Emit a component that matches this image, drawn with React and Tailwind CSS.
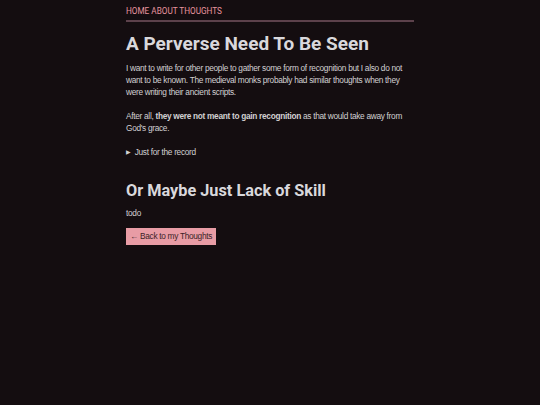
export default function App() {
  return (
    <div className="min-h-[405px] w-full bg-[#140d10] font-['Liberation_Sans',Arial,sans-serif] text-[#d2d0d2]">
      <div className="mx-auto w-[288px]">
        <nav className="border-b-2 border-[#5c414b] pt-[6px] pb-[4px] font-['Roboto','Liberation_Sans',sans-serif] text-[8.2px] leading-[10px] text-[#e8949f]">
          <span>HOME</span> <span>ABOUT</span> <span>THOUGHTS</span>
        </nav>
        <h1 className="mt-[10px] font-['Roboto','Liberation_Sans',sans-serif] text-[19px] leading-[24px] font-bold text-[#d9d8dc]">A Perverse Need To Be Seen</h1>
        <p className="mt-[6px] text-[8.3px] leading-[12px] tracking-[-0.3px]">
          I want to write for other people to gather some form of recognition but I also do not want to be known. The medieval monks probably had similar thoughts when they were writing their ancient scripts.
        </p>
        <p className="mt-[12px] text-[8.3px] leading-[12px] tracking-[-0.3px]">
          After all, <strong className="font-bold">they were not meant to gain recognition</strong> as that would take away from God's grace.
        </p>
        <div className="mt-[12px] flex items-center text-[8.3px] leading-[12px] tracking-[-0.3px]">
          <span className="mr-[4px] text-[6px]">▶</span>
          <span>Just for the record</span>
        </div>
        <h2 className="mt-[23px] font-['Roboto','Liberation_Sans',sans-serif] text-[16.3px] leading-[20px] font-bold text-[#d9d8dc]">Or Maybe Just Lack of Skill</h2>
        <p className="mt-[6px] text-[8.3px] leading-[12px] tracking-[-0.3px]">todo</p>
        <div className="mt-[3px]">
          <span className="inline-block bg-[#e89ca5] px-[4px] py-[3px] text-[8.3px] leading-[11px] tracking-[-0.3px] text-[#3b1f27]">← Back to my Thoughts</span>
        </div>
      </div>
    </div>
  );
}
